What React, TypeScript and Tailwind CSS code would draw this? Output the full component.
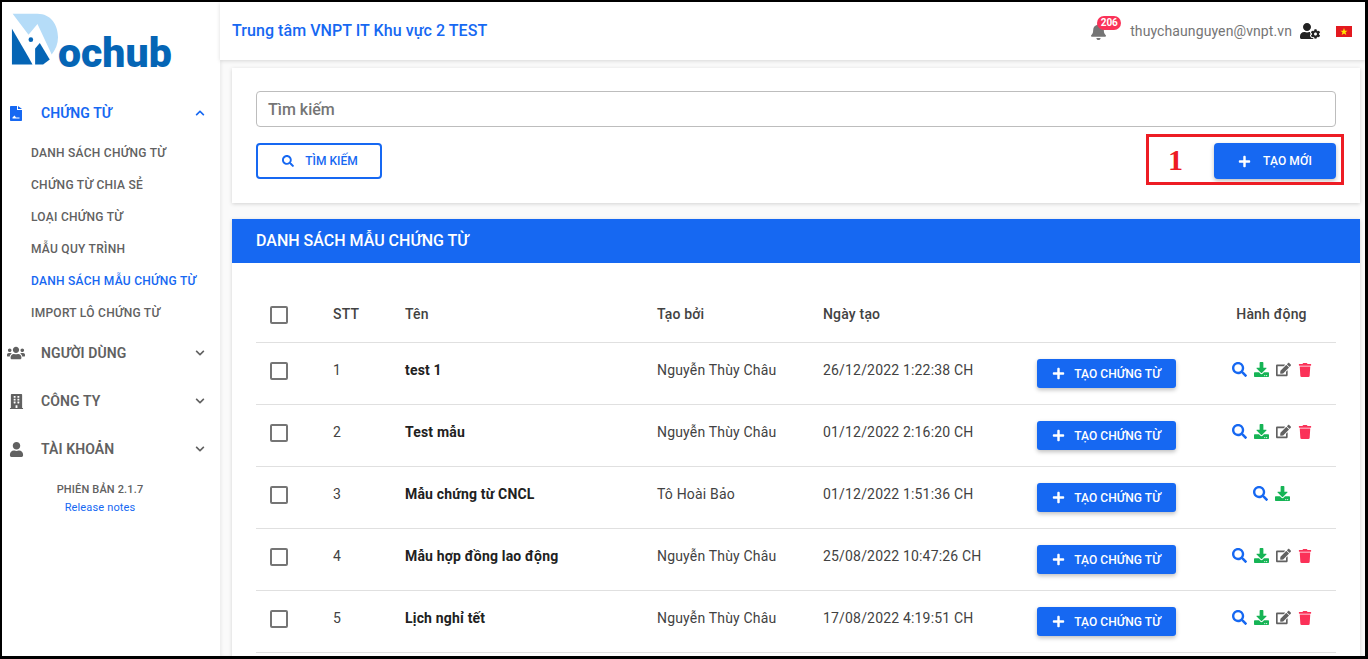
import { ReactNode } from 'react';
import {
  FaBell,
  FaBuilding,
  FaChevronDown,
  FaChevronUp,
  FaDownload,
  FaEdit,
  FaPlus,
  FaSearch,
  FaTrash,
  FaUser,
  FaUserCog,
  FaUsers,
} from 'react-icons/fa';

const subItems = [
  { label: 'DANH SÁCH CHỨNG TỪ' },
  { label: 'CHỨNG TỪ CHIA SẺ' },
  { label: 'LOẠI CHỨNG TỪ' },
  { label: 'MẪU QUY TRÌNH' },
  { label: 'DANH SÁCH MẪU CHỨNG TỪ', active: true },
  { label: 'IMPORT LÔ CHỨNG TỪ' },
];

const rows = [
  { id: 1, name: 'test 1', by: 'Nguyễn Thùy Châu', date: '26/12/2022 1:22:38 CH', full: true },
  { id: 2, name: 'Test mẫu', by: 'Nguyễn Thùy Châu', date: '01/12/2022 2:16:20 CH', full: true },
  { id: 3, name: 'Mẫu chứng từ CNCL', by: 'Tô Hoài Bảo', date: '01/12/2022 1:51:36 CH', full: false },
  { id: 4, name: 'Mẫu hợp đồng lao động', by: 'Nguyễn Thùy Châu', date: '25/08/2022 10:47:26 CH', full: true },
  { id: 5, name: 'Lịch nghỉ tết', by: 'Nguyễn Thùy Châu', date: '17/08/2022 4:19:51 CH', full: true },
];

const gridCols = 'grid grid-cols-[77px_72px_252px_166px_214px_170px_129px] items-center';

function Logo() {
  return (
    <div className="flex items-start h-[87px] pl-[4px] pt-[6px]">
      <svg width="53" height="64" viewBox="0 0 160 192" className="shrink-0">
        <path d="M20 17H95C135 17 157 50 157 88C157 108 150 125 138 140L95 48L68 80Z" fill="#b5dcf8" />
        <path d="M18 62L68 148L80 170H18Z" fill="#0565b5" />
        <path d="M88 122L102 105L132 155L112 170H88Z" fill="#0565b5" />
        <circle cx="75" cy="95" r="7" fill="#0565b5" />
      </svg>
      <span className="font-['Roboto',sans-serif] font-black text-[#0565b5] text-[41px] leading-[41px] ml-[-1px] mt-[25px]">
        ochub
      </span>
    </div>
  );
}

function DocIcon() {
  return (
    <svg width="12" height="15" viewBox="0 0 12 15">
      <path d="M0 1C0 .4.4 0 1 0H7V4H12V14C12 14.6 11.6 15 11 15H1C.4 15 0 14.6 0 14Z" fill="currentColor" />
      <path d="M8 0L12 3H8Z" fill="currentColor" />
      <path d="M2.5 11.5L4.5 9.5L6 11.5H9.5V12.5H2.5Z" fill="#ffffff" />
    </svg>
  );
}

function NavSection({ icon, label, open }: { icon: ReactNode; label: string; open?: boolean }) {
  return (
    <div className={`flex items-center h-12 pr-[15px] ${open ? 'text-[#1668f2]' : 'text-[#616161]'}`}>
      <span className="w-[28px] flex justify-center text-[18px] shrink-0">{icon}</span>
      <span className="ml-[11px] text-[14px] font-semibold tracking-[0.1px] flex-1">{label}</span>
      {open ? <FaChevronUp className="text-[10px]" /> : <FaChevronDown className="text-[10px]" />}
    </div>
  );
}

function Sidebar() {
  return (
    <aside className="w-[218px] shrink-0 bg-white flex flex-col">
      <Logo />
      <NavSection icon={<DocIcon />} label="CHỨNG TỪ" open />
      <div>
        {subItems.map(item => (
          <div
            key={item.label}
            className={`h-8 flex items-center pl-[29px] text-[12px] font-medium tracking-[0.27px] ${item.active ? 'text-[#1668f2]' : 'text-[#616161]'}`}
          >
            {item.label}
          </div>
        ))}
      </div>
      <NavSection icon={<FaUsers />} label="NGƯỜI DÙNG" />
      <NavSection icon={<FaBuilding className="text-[15px]" />} label="CÔNG TY" />
      <NavSection icon={<FaUser className="text-[15px]" />} label="TÀI KHOẢN" />
      <div className="text-center text-[11px] leading-[18px] mt-[8px] pr-[22px] tracking-[0.15px]">
        <div className="font-medium text-[#616161]">PHIÊN BẢN 2.1.7</div>
        <div className="text-[#1668f2]">Release notes</div>
      </div>
    </aside>
  );
}

function Header() {
  return (
    <header className="h-[58px] shrink-0 bg-white shadow-[0_1px_4px_rgba(0,0,0,0.14)] flex items-center pl-[12px] pr-[13px] relative z-10">
      <span className="text-[#1668f2] text-[16px] font-medium tracking-[0.06px] flex-1">Trung tâm VNPT IT Khu vực 2 TEST</span>
      <div className="relative mr-[23px] text-[#757575] text-[17px]">
        <FaBell />
        <span className="absolute -top-[7px] left-[7px] h-[14px] px-[3.5px] rounded-full bg-[#fb3158] text-white text-[10px] leading-[14px] font-bold">
          206
        </span>
      </div>
      <span className="text-[#757575] text-[14px] tracking-[0.1px] mr-[8px]">thuychaunguyen@vnpt.vn</span>
      <FaUserCog className="text-[#212121] text-[20px] mr-[16px]" />
      <svg width="16" height="11" viewBox="0 0 16 11">
        <rect width="16" height="11" fill="#e3191f" />
        <path d="M8 2L9 4.7H11.6L9.5 6.3L10.3 9L8 7.4L5.7 9L6.5 6.3L4.4 4.7H7Z" fill="#ffe600" />
      </svg>
    </header>
  );
}

function SearchCard() {
  return (
    <section className="bg-white h-[135px] shadow-[0_1px_4px_rgba(0,0,0,0.16)] px-[24px] pt-[23px] flex flex-col">
      <div className="h-[36px] border border-[#bdbdbd] rounded-[4px] flex items-center pt-px px-[11px] text-[16px] font-medium text-[#757575]">
        Tìm kiếm
      </div>
      <div className="flex justify-between items-center mt-[16px]">
        <button className="w-[126px] h-[36px] border-2 border-[#1668f2] rounded-[4px] flex items-center justify-center gap-[11px] pl-[2px] text-[#1668f2] text-[12px] font-medium">
          <FaSearch className="text-[12px]" />
          TÌM KIẾM
        </button>
        <button className="w-[122px] h-[36px] bg-[#1668f2] rounded-[4px] shadow-[0_2px_4px_rgba(0,0,0,0.25)] flex items-center justify-center gap-[12px] text-white text-[12px] font-medium tracking-[0.1px]">
          <FaPlus className="text-[13px]" />
          TẠO MỚI
        </button>
      </div>
    </section>
  );
}

function Actions({ full }: { full: boolean }) {
  return (
    <div className="flex items-center justify-center gap-[7px] text-[15px] -mt-[2px]">
      <FaSearch className="text-[#1668f2]" />
      <FaDownload className="text-[#16b455]" />
      {full && <FaEdit className="text-[#616161]" />}
      {full && <FaTrash className="text-[#fb3158] text-[14px]" />}
    </div>
  );
}

function Checkbox() {
  return <div className="ml-[14px] w-[18px] h-[18px] border-2 border-[#757575] rounded-[2px]" />;
}

function TemplateTable() {
  return (
    <section className="flex-1 bg-white shadow-[0_1px_4px_rgba(0,0,0,0.16)] mt-[16px] flex flex-col min-h-0">
      <div className="h-[44px] shrink-0 bg-[#1668f2] flex items-center px-[24px] text-white text-[16px] font-medium">
        DANH SÁCH MẪU CHỨNG TỪ
      </div>
      <div className="px-[24px] pt-[24px] text-[14px] text-[#424242] tracking-[0.18px]">
        <div className={`${gridCols} h-[56px] border-b border-[#e0e0e0]`}>
          <Checkbox />
          <span className="font-medium">STT</span>
          <span className="font-medium">Tên</span>
          <span className="font-medium">Tạo bởi</span>
          <span className="font-medium">Ngày tạo</span>
          <span />
          <span className="font-medium text-center">Hành động</span>
        </div>
        {rows.map(row => (
          <div key={row.id} className={`${gridCols} h-[62px] pb-[6px] border-b border-[#e0e0e0]`}>
            <Checkbox />
            <span>{row.id}</span>
            <span className="font-bold text-[#212121]">{row.name}</span>
            <span>{row.by}</span>
            <span>{row.date}</span>
            <button className="w-[139px] h-[29px] mt-[5px] pt-px bg-[#1668f2] rounded-[3px] shadow-[0_2px_4px_rgba(0,0,0,0.25)] flex items-center justify-center gap-[9px] text-white text-[12px] font-medium tracking-[0.05px]">
              <FaPlus className="text-[13px]" />
              TẠO CHỨNG TỪ
            </button>
            <Actions full={row.full} />
          </div>
        ))}
      </div>
    </section>
  );
}

export default function App() {
  return (
    <div className="relative h-[659px] w-[1368px] overflow-hidden border-2 border-b-[3px] border-r-[3px] border-black font-['Roboto',sans-serif] flex bg-[#fafafa]">
      <Sidebar />
      <main className="flex-1 flex flex-col min-w-0 shadow-[inset_2px_0_3px_rgba(0,0,0,0.05)]">
        <Header />
        <div className="flex-1 flex flex-col min-h-0 pl-[12px] pr-[5px] pt-[8px]">
          <SearchCard />
          <TemplateTable />
        </div>
      </main>
      <div className="absolute left-[1144px] top-[132px] w-[198px] h-[51px] border-[3px] border-[#ed1c24] pointer-events-none">
        <span className="absolute left-[19px] top-[8px] font-['Liberation_Serif',serif] font-bold text-[30px] leading-[30px] text-[#ed1c24]">
          1
        </span>
      </div>
    </div>
  );
}
